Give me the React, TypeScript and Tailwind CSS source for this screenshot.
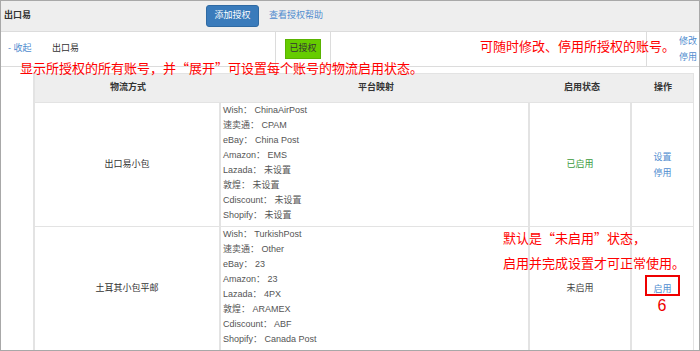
import React from "react";

// DATA ************************************************************************************************************************************
const rows = [
  {
    id: "ck1",
    name: "出口易小包",
    enabled: true,
    maps: [
      ["Wish", "ChinaAirPost"],
      ["速卖通", "CPAM"],
      ["eBay", "China Post"],
      ["Amazon", "EMS"],
      ["Lazada", "未设置"],
      ["敦煌", "未设置"],
      ["Cdiscount", "未设置"],
      ["Shopify", "未设置"],
    ],
  },
  {
    id: "turkey",
    name: "土耳其小包平邮",
    enabled: false,
    maps: [
      ["Wish", "TurkishPost"],
      ["速卖通", "Other"],
      ["eBay", "23"],
      ["Amazon", "23"],
      ["Lazada", "4PX"],
      ["敦煌", "ARAMEX"],
      ["Cdiscount", "ABF"],
      ["Shopify", "Canada Post"],
    ],
  },
];

const FONT = `font-['Liberation_Sans','Noto_Sans_CJK_SC',sans-serif]`;
const NOTE = `absolute font-['Noto_Sans_CJK_SC',sans-serif] text-[13px] leading-[18px] text-[#f00] whitespace-nowrap`;
const LINK = `text-[#4f8ccf]`;

export default function App() {
  return (
    <div className={`${FONT} relative h-[351px] w-[700px] overflow-hidden border border-[#a8a8a8] bg-white text-[9px] text-[#444]`}>
      {/* HEADER */}
      <div className="flex h-[31px] items-center border-b border-[#dcdcdc] bg-[#eee]">
        <div className="w-[205px] pl-[3px] font-bold text-[#333]">出口易</div>
        <button className="h-[22px] w-[53px] rounded-[3px] border border-[#2f6aa3] bg-[#3a7bbb] text-[9px] text-white">添加授权</button>
        <a className={`ml-[10px] ${LINK}`}>查看授权帮助</a>
      </div>

      {/* ACCOUNT ROW */}
      <div className="flex h-[35px] border-b border-[#dcdcdc]">
        <div className="flex w-[275px] items-center border-r border-[#dcdcdc] pl-[7px]">
          <a className={`w-[44px] ${LINK}`}>- 收起</a>
          <span className="text-[#333]">出口易</span>
        </div>
        <div className="flex w-[55px] items-center justify-center border-r border-[#dcdcdc]">
          <span className="border border-[#59b300] bg-[#66cc00] px-[3px] py-[2px] text-[#333]">已授权</span>
        </div>
        <div className="w-[316px] border-r border-[#dcdcdc]" />
        <div className={`flex flex-1 flex-col justify-center pl-[32px] leading-[16px] ${LINK}`}>
          <a>修改</a>
          <a>停用</a>
        </div>
      </div>

      {/* CHANNEL TABLE */}
      <div className="ml-[32px] mt-[6px] w-[661px] border-l-2 border-r border-t border-[#e3e3e3]">
        <div className="flex h-[29px] items-center border-b border-[#e3e3e3] bg-[#eee] font-bold text-[#333]">
          <div className="w-[186px] text-center">物流方式</div>
          <div className="w-[310px] text-center">平台映射</div>
          <div className="w-[102px] text-center">启用状态</div>
          <div className="flex-1 text-center">操作</div>
        </div>
        {rows.map((row) => (
          <div key={row.id} className="flex h-[124px] border-b border-[#e3e3e3]">
            <div className="flex w-[186px] items-center justify-center border-r-2 border-[#e3e3e3] text-[#333]">{row.name}</div>
            <div className="w-[309px] border-r-2 border-[#e3e3e3] pl-[2px] leading-[15px] text-[#555]">
              {row.maps.map(([k, v]) => (
                <div key={k}>
                  {k}： {v}
                </div>
              ))}
            </div>
            <div className={`flex w-[102px] items-center justify-center border-r-2 border-[#e3e3e3] ${row.enabled ? "text-[#3a9a3a]" : "text-[#444]"}`}>
              {row.enabled ? "已启用" : "未启用"}
            </div>
            <div className={`flex flex-1 flex-col items-center justify-center leading-[16px] ${LINK}`}>
              {row.enabled ? (
                <>
                  <a>设置</a>
                  <a>停用</a>
                </>
              ) : (
                <a className="relative">
                  启用
                  <span className="absolute -inset-x-[8px] -top-[6px] h-[21px] border-2 border-[#e00]" />
                  <span className="absolute left-[4px] top-[16px] font-['Liberation_Sans',sans-serif] text-[16px] leading-[18px] text-[#e00]">6</span>
                </a>
              )}
            </div>
          </div>
        ))}
      </div>

      {/* NOTES */}
      <p className={`${NOTE} left-[19px] top-[58px]`}>显示所授权的所有账号，并“展开”可设置每个账号的物流启用状态。</p>
      <p className={`${NOTE} left-[479px] top-[36px]`}>可随时修改、停用所授权的账号。</p>
      <p className={`${NOTE} left-[502px] top-[224px] leading-[25px]`}>
        默认是“未启用”状态，
        <br />
        启用并完成设置才可正常使用。
      </p>
    </div>
  );
}
